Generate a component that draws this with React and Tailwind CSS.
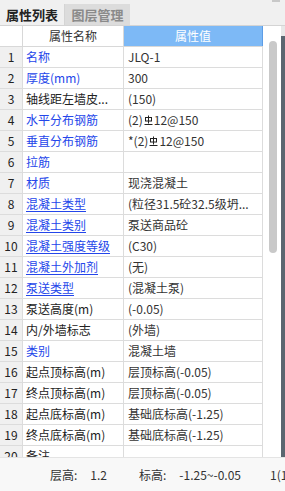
import React from 'react';

const rows = [
  { name: '名称', value: 'JLQ-1', blue: true },
  { name: '厚度(mm)', value: '300', blue: true },
  { name: '轴线距左墙皮...', value: '(150)' },
  { name: '水平分布钢筋', value: ['(2)', '12@150'], blue: true },
  { name: '垂直分布钢筋', value: ['*(2)', '12@150'], blue: true },
  { name: '拉筋', value: '', blue: true },
  { name: '材质', value: '现浇混凝土', blue: true },
  { name: '混凝土类型', value: '(粒径31.5砼32.5级坍...', blue: true, link: true },
  { name: '混凝土类别', value: '泵送商品砼', blue: true, link: true },
  { name: '混凝土强度等级', value: '(C30)', blue: true, link: true },
  { name: '混凝土外加剂', value: '(无)', blue: true, link: true },
  { name: '泵送类型', value: '(混凝土泵)', blue: true, link: true },
  { name: '泵送高度(m)', value: '(-0.05)' },
  { name: '内/外墙标志', value: '(外墙)' },
  { name: '类别', value: '混凝土墙', blue: true },
  { name: '起点顶标高(m)', value: '层顶标高(-0.05)' },
  { name: '终点顶标高(m)', value: '层顶标高(-0.05)' },
  { name: '起点底标高(m)', value: '基础底标高(-1.25)' },
  { name: '终点底标高(m)', value: '基础底标高(-1.25)' },
  { name: '备注', value: '' },
];

// HRB400 rebar grade mark
const Rebar = () => (
  <svg width="9" height="11" viewBox="0 0 9 11" className="inline-block mx-[1px] -mt-[3px]" fill="none" stroke="#222" strokeWidth="1">
    <rect x="1.5" y="2.5" width="6" height="3.5" />
    <path d="M4.5 0.5v8M0.5 9.5h8" />
  </svg>
);

export default function App() {
  return (
    <div
      className="w-[285px] h-[491px] flex flex-col bg-[#f0f0f0] overflow-hidden text-[12px] text-[#333]"
      style={{ fontFamily: '"Noto Sans CJK SC", "Noto Sans", sans-serif' }}
    >
      <div className="h-[4px] flex justify-end pr-[5px]">
        <div className="w-[8px] h-[2px] bg-[#c8c8c8]" />
      </div>

      <div className="h-[22px] flex border-b border-[#d4d4d4]">
        <div className="w-[65px] flex items-center justify-center font-bold text-[13px] text-[#222] border-r border-[#d4d4d4]">
          属性列表
        </div>
        <div className="w-[65px] flex items-center justify-center font-bold text-[13px] text-[#8a8a8a] bg-[#dcdcdc]">
          图层管理
        </div>
      </div>

      <div className="h-[431px] flex bg-white">
        <div className="w-[263px] flex flex-col overflow-hidden">
          <div className="h-[21px] flex shrink-0 border-b border-[#d8d8d8]">
            <div className="w-[23px] border-r border-[#d8d8d8]" />
            <div className="w-[101px] flex items-center justify-center border-r border-[#d8d8d8] text-[#333]">
              属性名称
            </div>
            <div className="flex-1 flex items-center justify-center bg-[#7db9f6] text-white border-r border-[#5d9de6]">
              属性值
            </div>
          </div>
          {rows.map((r, i) => (
            <div key={i} className="h-[21px] flex shrink-0 border-b border-[#dcdcdc]">
              <div className="w-[23px] flex items-center justify-center bg-[#f0f0f0] border-r border-[#dcdcdc] text-[#222]">
                {i + 1}
              </div>
              <div className="w-[101px] flex items-center pl-[3px] border-r border-[#dcdcdc] whitespace-nowrap overflow-hidden">
                <span className={(r.blue ? 'text-[#2446ea] ' : 'text-[#222] ') + (r.link ? 'underline underline-offset-2' : '')}>
                  {r.name}
                </span>
              </div>
              <div className="flex-1 flex items-center pl-[4px] border-r border-[#dcdcdc] whitespace-nowrap overflow-hidden text-[#333]">
                {Array.isArray(r.value) ? (
                  <span>
                    {r.value[0]}
                    <Rebar />
                    {r.value[1]}
                  </span>
                ) : (
                  r.value
                )}
              </div>
            </div>
          ))}
        </div>
        <div className="w-[18px] pl-[6px] pt-[15px]">
          <div className="w-[8px] h-[212px] rounded-full bg-[#c9c9c9]" />
        </div>
        <div className="w-[4px] flex flex-col">
          <div className="h-[10px] bg-[#e8e8e8]" />
          <div className="flex-1 bg-[#5b6670]" />
        </div>
      </div>

      <div className="flex-1 flex items-center bg-[#f8f8f8] border-t border-[#e4e4e4] whitespace-nowrap text-[#333] text-[12px]">
        <div className="w-[2px] h-[5px] bg-[#4aa0e0] ml-0 mr-[50px]" />
        <span>层高:</span>
        <span className="ml-[13px]">1.2</span>
        <span className="ml-[32px]">标高:</span>
        <span className="ml-[13px]">-1.25~-0.05</span>
        <span className="ml-[29px]">1(1</span>
      </div>
    </div>
  );
}
